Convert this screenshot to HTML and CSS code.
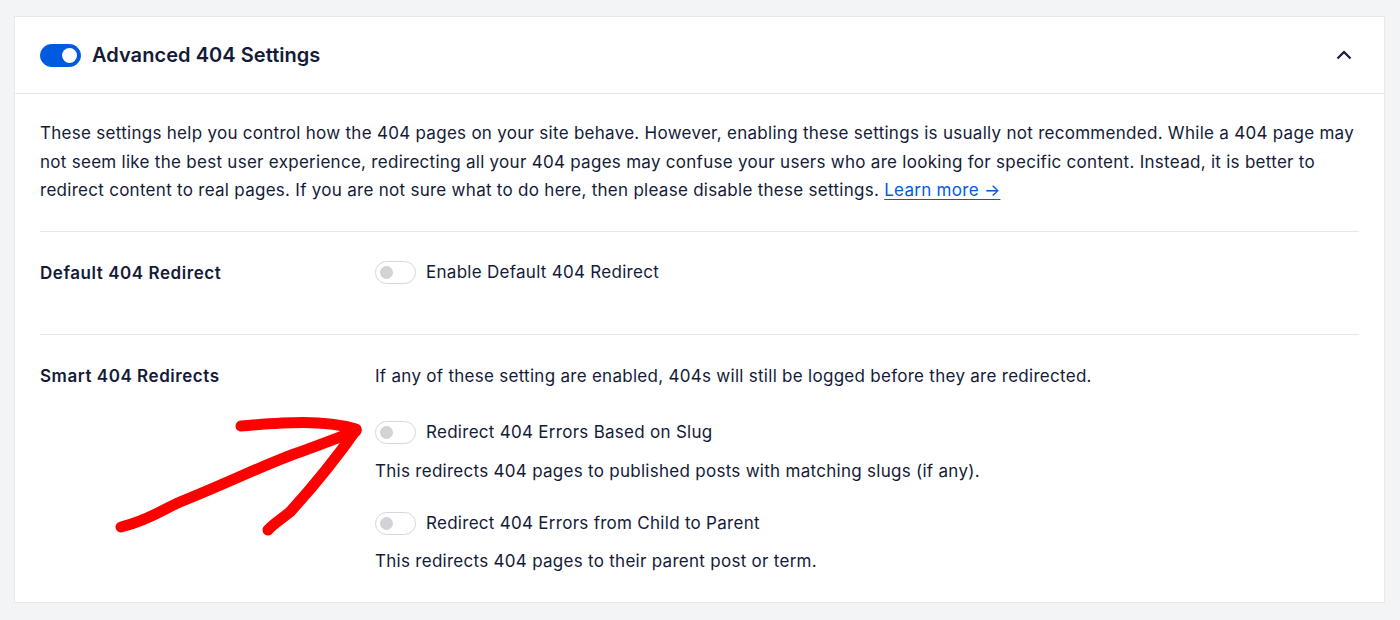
FILE: index.html
```html
<!DOCTYPE html>
<html lang="en">
<head>
<meta charset="utf-8">
<title>Advanced 404 Settings</title>
<link rel="stylesheet" href="styles.css">
</head>
<body>
<div class="page">
  <section class="card">
    <header class="card-header">
      <span class="toggle toggle-on"><span class="knob"></span></span>
      <h2 class="card-title">Advanced 404 Settings</h2>
      <svg class="chevron" width="16" height="10" viewBox="0 0 16 10"><path d="M1.5 8.5 L8 2 L14.5 8.5" fill="none" stroke="#141b38" stroke-width="2.2"/></svg>
    </header>
    <div class="card-body">
      <p class="intro">These settings help you control how the 404 pages on your site behave. However, enabling these settings is usually not recommended. While a 404 page may not seem like the best user experience, redirecting all your 404 pages may confuse your users who are looking for specific content. Instead, it is better to redirect content to real pages. If you are not sure what to do here, then please disable these settings. <a href="#" class="link">Learn more →</a></p>

      <div class="setting-row row-default">
        <div class="setting-label">Default 404 Redirect</div>
        <div class="setting-content">
          <label class="option">
            <span class="toggle"><span class="knob"></span></span>
            <span>Enable Default 404 Redirect</span>
          </label>
        </div>
      </div>

      <div class="setting-row row-smart">
        <div class="setting-label">Smart 404 Redirects</div>
        <div class="setting-content">
          <p class="note">If any of these setting are enabled, 404s will still be logged before they are redirected.</p>
          <label class="option opt-first">
            <span class="toggle"><span class="knob"></span></span>
            <span>Redirect 404 Errors Based on Slug</span>
          </label>
          <p class="desc">This redirects 404 pages to published posts with matching slugs (if any).</p>
          <label class="option opt-second">
            <span class="toggle"><span class="knob"></span></span>
            <span>Redirect 404 Errors from Child to Parent</span>
          </label>
          <p class="desc">This redirects 404 pages to their parent post or term.</p>
        </div>
      </div>
    </div>
  </section>
  <svg class="annotation" width="1400" height="620" viewBox="0 0 1400 620">
    <g fill="none" stroke="#ff0000" stroke-linecap="round" stroke-linejoin="round">
      <path d="M121 527 C 150 520, 165 508, 180 502 C 230 482, 270 462, 300 452 C 320 445, 340 437, 356 431" stroke-width="11"/>
      <path d="M241 426 C 280 423, 320 419, 356 429" stroke-width="11"/>
      <path d="M356 430 C 335 460, 310 490, 290 512 C 280 520, 272 525, 268 530" stroke-width="11"/>
    </g>
  </svg>
</div>
</body>
</html>
```

FILE: styles.css
```css
* { box-sizing: border-box; }
html, body {
  margin: 0;
  padding: 0;
}
body {
  background: #f3f4f5;
  font-family: Inter, "Noto Sans", "Liberation Sans", sans-serif;
  color: #141b38;
}
.page {
  position: relative;
  width: 1400px;
  height: 620px;
  padding: 16px 15px 0 14px;
}
.card {
  background: #ffffff;
  border: 1px solid #e8e8eb;
  height: 587px;
}
.card-header {
  display: flex;
  align-items: center;
  height: 77px;
  padding: 0 32px 0 25px;
  border-bottom: 1px solid #e8e8eb;
}
.card-title {
  margin: 0 0 0 11px;
  font-size: 20px;
  font-weight: 600;
  letter-spacing: 0.05px;
  flex: 1;
}
.chevron { display: block; }

.toggle {
  position: relative;
  display: inline-block;
  flex: none;
  width: 41px;
  height: 23px;
  border-radius: 12px;
  border: 1px solid #d6d7dc;
  background: #ffffff;
}
.toggle .knob {
  position: absolute;
  top: 4px;
  left: 4px;
  width: 13px;
  height: 13px;
  border-radius: 50%;
  background: #d2d3d9;
}
.toggle-on {
  background: #005ae0;
  border-color: #005ae0;
}
.toggle-on .knob {
  left: auto;
  right: 3px;
  top: 3px;
  width: 15px;
  height: 15px;
  background: #ffffff;
}

.card-body {
  padding: 25px 25px 0 25px;
  font-size: 17px;
  line-height: 28.5px;
  letter-spacing: 0.28px;
}
.intro {
  margin: 0 0 26px;
}
.link {
  color: #005ae0;
  text-decoration: underline;
  text-underline-offset: 3px;
}
.setting-row {
  display: grid;
  grid-template-columns: 335px 1fr;
  border-top: 1px solid #e8e8eb;
}
.row-default {
  padding: 27px 0 47px;
}
.row-smart {
  padding: 27px 0 0;
}
.setting-label {
  font-weight: 600;
  letter-spacing: 0.55px;
}
.setting-content p { margin: 0; }
.option {
  display: flex;
  align-items: center;
  gap: 10px;
  height: 28px;
}
.note { margin-bottom: 28px !important; }
.opt-first { margin-bottom: 10px; }
.opt-second { margin-top: 24px; margin-bottom: 10px; }

.annotation {
  position: absolute;
  left: 0;
  top: 0;
  pointer-events: none;
}
```
